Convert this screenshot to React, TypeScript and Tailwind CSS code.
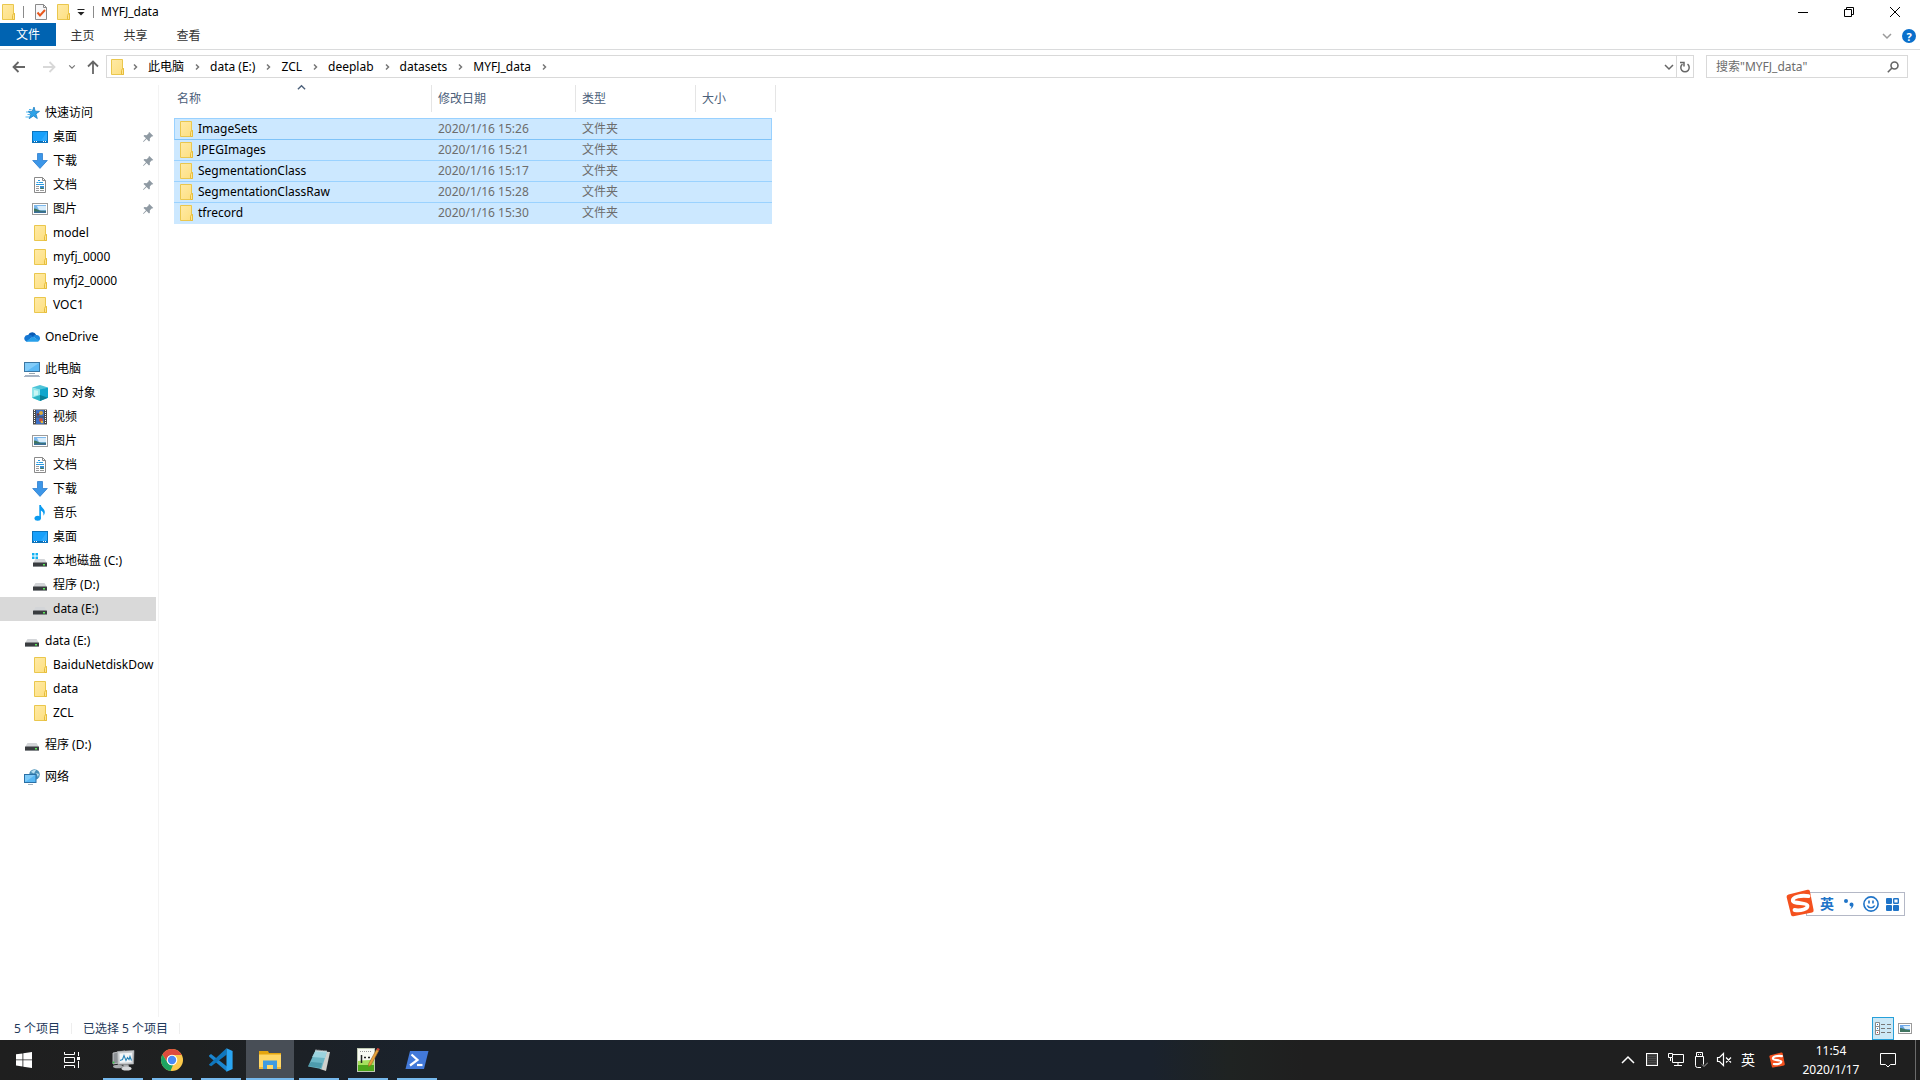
import type { ReactNode } from 'react'

type IconProps = { className?: string }

/* ---------- small shell icons (16px grid) ---------- */

function FolderIcon({ className = 'h-4 w-4' }: IconProps) {
  return (
    <svg viewBox="0 0 16 16" className={className} aria-hidden>
      <defs>
        <linearGradient id="folder-fill" x1="0" y1="0" x2="1" y2="1">
          <stop offset="0" stopColor="#ffeaa6" />
          <stop offset="1" stopColor="#fddf7f" />
        </linearGradient>
      </defs>
      <path d="M2.5.5h11v9h1v6h-12z" fill="url(#folder-fill)" stroke="#eac74d" />
      <path d="M12.5 15.5v-4l1-2h1v6z" fill="#ffe48f" stroke="#e6bd3c" />
    </svg>
  )
}

function QuickAccessIcon() {
  return (
    <svg viewBox="0 0 16 16" className="h-4 w-4" aria-hidden>
      <path
        d="M10 2l1.2 4.2 4.3.2-3.6 2.5 1.4 4.6-3.9-2.6-4.2 2.8 1.7-4.8L4 6.4l4.3-.2z"
        fill="#2da2e8"
        stroke="#1b7fc4"
        strokeWidth=".8"
      />
      <path d="M5 4.5h2.5M2 7h3M3.5 9.5h3M1.5 12h4" stroke="#52b6ee" fill="none" />
    </svg>
  )
}

function DesktopIcon() {
  return (
    <svg viewBox="0 0 16 16" className="h-4 w-4" aria-hidden>
      <rect x=".5" y="2.5" width="15" height="11" fill="#18a0fb" stroke="#0b74bd" />
      <path d="M15 3v8L8 13z" fill="#3db0ff" opacity=".6" />
      <path d="M1 12.5h14" stroke="#0a6cb5" />
      <path d="M2 12.5h1M4 12.5h1M11 12.5h1M13 12.5h1" stroke="#fff" />
    </svg>
  )
}

function DownloadIcon() {
  return (
    <svg viewBox="0 0 16 16" className="h-4 w-4" aria-hidden>
      <path d="M5.5.5h5v7h4.8L8 15.4.7 7.5h4.8z" fill="#3c96e8" stroke="#2f7fce" strokeWidth=".8" />
    </svg>
  )
}

function DocumentIcon() {
  return (
    <svg viewBox="0 0 16 16" className="h-4 w-4" aria-hidden>
      <path d="M2.5.5h8l3 3v12h-11z" fill="#fff" stroke="#8a8a8a" />
      <path d="M10.5.5v3h3" fill="none" stroke="#8a8a8a" />
      <path d="M6 3.5h2M4.500 5.500h2M7 5.500h4M4 7.500h8" stroke="#2b9be0" />
      <path d="M4 9.5h3M4 11.5h3M4 13.5h3" stroke="#9a9a9a" />
      <rect x="8" y="9" width="4" height="3" fill="#3d8fd0" />
      <path d="M8 12l2-1.5 2 1.5z" fill="#4c7c4e" />
      <path d="M8 13.5h4" stroke="#9a9a9a" />
    </svg>
  )
}

function PictureIcon() {
  return (
    <svg viewBox="0 0 16 16" className="h-4 w-4" aria-hidden>
      <rect x=".5" y="2.5" width="15" height="11" fill="#fff" stroke="#9b9b9b" />
      <rect x="2" y="4" width="12" height="8" fill="#7db8ec" />
      <path d="M5 5h9v4H7z" fill="#d9edfb" />
      <path d="M2 7.5c3 0 4 2 7 2.200 2 0 4 .3 5 0V12H2z" fill="#3f7560" />
      <path d="M2 10.5h12V12H2z" fill="#3b6f9a" />
    </svg>
  )
}

function OneDriveIcon() {
  return (
    <svg viewBox="0 0 16 16" className="h-4 w-4" aria-hidden>
      <path d="M4.2 6.2a4.3 4.3 0 0 1 8-.3L9 9z" fill="#0a5bb5" />
      <path d="M1.8 12.2A3.4 3.4 0 0 1 4 6c2-.7 3.5.2 5 1.5l-6 5.200z" fill="#1476d2" />
      <path d="M9 7.5c1-1.5 2.3-1.8 3.4-1.5A3.3 3.3 0 0 1 16 9.6c0 1.3-.6 2-1.3 2.4z" fill="#1b86dd" />
      <path d="M2 12.2L9 7.7l6.300 3.700c-.5.8-1.2 1.2-2.3 1.3H3.5c-.7 0-1.2-.2-1.5-.5z" fill="#28a0ea" />
    </svg>
  )
}

function ComputerIcon() {
  return (
    <svg viewBox="0 0 16 16" className="h-4 w-4" aria-hidden>
      <rect x=".5" y="1.5" width="15" height="9" fill="#5cb9f5" stroke="#3b77a3" />
      <path d="M1 2h14L3 10H1z" fill="#93d4fb" opacity=".7" />
      <path d="M5 12.5h6" stroke="#9aa7b0" />
      <path d="M0 15.5h16M1 14.5h14" stroke="#a9b5c4" />
    </svg>
  )
}

function CubeIcon() {
  return (
    <svg viewBox="0 0 16 16" className="h-4 w-4" aria-hidden>
      <path d="M8 0l8 2.6L8 5.5 0 2.6z" fill="#4fc4d8" />
      <path d="M0 2.6L8 4.5V16l-8-3.3z" fill="#8fe5ea" />
      <path d="M16 2.6L8 4.5V16l8-3.3z" fill="#11a6cc" />
      <path d="M0 12.7L8 10v6z" fill="#2bb3c4" />
      <path d="M16 12.7L8 10v6z" fill="#0a7f96" />
      <path d="M2 5l4 .8v4L2 11z" fill="#c8f6f4" />
    </svg>
  )
}

function VideoIcon() {
  return (
    <svg viewBox="0 0 16 16" className="h-4 w-4" aria-hidden>
      <rect x="1" y=".5" width="14" height="15" fill="#4a4a4a" />
      <path d="M2.5 1v14M13.5 1v14" stroke="#fff" strokeDasharray="1 1" />
      <rect x="4" y="1" width="8" height="6.500" fill="#3c6fc4" />
      <rect x="4" y="8.500" width="8" height="6.500" fill="#3c6fc4" />
      <circle cx="9" cy="4" r="2" fill="#d9a93c" />
      <circle cx="6" cy="5.500" r="1.300" fill="#7a3b35" />
      <circle cx="9" cy="11" r="2" fill="#c8503c" />
      <circle cx="10" cy="13" r="1.300" fill="#e0b840" />
    </svg>
  )
}

function MusicIcon() {
  return (
    <svg viewBox="0 0 16 16" className="h-4 w-4" aria-hidden>
      <ellipse cx="5.700" cy="13.300" rx="3.200" ry="2.500" fill="#0a9bf0" />
      <path d="M7.3 0h1.6c.3 2.8 3.8 3.6 3.900 7 0 1.7-.7 3-1.5 3.700.6-2.700-.4-4.300-2.400-5.200v8H7.300z" fill="#0a9bf0" />
    </svg>
  )
}

function DriveIcon({ system = false }: { system?: boolean }) {
  return (
    <svg viewBox="0 0 16 16" className="h-4 w-4" aria-hidden>
      <path d="M3.500 6h9l2.500 4H1z" fill="#d3d5d8" />
      <rect x="1" y="9.500" width="14" height="4.500" rx=".5" fill="#3a3d40" />
      <path d="M1 13.500h14" stroke="#85898c" />
      <rect x="11" y="11" width="2" height="1.500" fill="#5bea5b" />
      {system && (
        <path d="M0 0h2.500v2.500H0zM3.500 0H6v2.500H3.500zM0 3.500h2.500V6H0zM3.500 3.500H6V6H3.500z" fill="#12b1f3" />
      )}
    </svg>
  )
}

function NetworkIcon() {
  return (
    <svg viewBox="0 0 16 16" className="h-4 w-4" aria-hidden>
      <circle cx="10.500" cy="5.500" r="5.300" fill="#4a90b8" />
      <path d="M7 3c1.500-2 4-2.500 5-2l-2 3.500zM12 4l3 1-1 3z" fill="#b9dff0" />
      <rect x=".5" y="5.500" width="11.500" height="8" fill="#58b7f3" stroke="#2a6fa5" />
      <path d="M1 6h10L2 12.500H1z" fill="#8fd2fa" opacity=".7" />
      <path d="M4 15.500h5" stroke="#a4b4c0" />
    </svg>
  )
}

function PinIcon() {
  return (
    <svg viewBox="0 0 12 12" className="h-3 w-3" aria-hidden>
      <path d="M7.300 1l4 4-1.200.6-.5-.1-1.800 2 .1 2.300-.9.800-2.400-2.500L1.500 11l-.5-.5 3-3.200L1.500 4.900l.9-.9 2.300.2 2-1.900-.1-.6z" fill="#8f9aa3" />
    </svg>
  )
}

function Chevron({ className = '', d = 'M4 2.500L6.500 5 4 7.500' }: { className?: string; d?: string }) {
  return (
    <svg viewBox="0 0 10 10" className={className} fill="none" stroke="currentColor" strokeWidth="1.500" aria-hidden>
      <path d={d} />
    </svg>
  )
}

function SogouIcon({ className = '' }: IconProps) {
  return (
    <svg viewBox="0 0 28 28" className={className} aria-hidden>
      <path d="M2.500 5.500L21.500.8q2-.4 2.400 1.400L27.600 21q.3 2-1.500 2.500L7.500 27.300q-2 .3-2.500-1.500L.6 8q-.3-2 1.900-2.500z" fill="#f4511e" />
      <path
        d="M22.500 7.200C15 5.800 6.500 8 6.800 11.500c.3 3.500 14.200 1.800 14.700 5.300.4 3.200-6.500 5.200-13 4.200"
        fill="none"
        stroke="#fff"
        strokeWidth="3.800"
        strokeLinecap="round"
      />
    </svg>
  )
}

/* ---------- window chrome ---------- */

function TitleBar() {
  return (
    <header className="flex h-[23px] items-center pr-[2px]">
      <FolderIcon />
      <span className="ml-[7px] h-3 w-px bg-[#8a8a8a]" />
      <button type="button" aria-label="属性" className="ml-[10px]">
        <svg viewBox="0 0 14 16" className="h-4 w-[14px]" aria-hidden>
          <path d="M1.500.500h8l3 3v12h-11z" fill="#f7f7f9" stroke="#8a8a8a" />
          <path d="M9.500.500v3h3" fill="none" stroke="#8a8a8a" />
          <path d="M3.500 8.500l2.500 3 5-5.500" fill="none" stroke="#e8571c" strokeWidth="2" />
        </svg>
      </button>
      <button type="button" aria-label="新建文件夹" className="ml-[7px]">
        <FolderIcon />
      </button>
      <button type="button" aria-label="自定义快速访问工具栏" className="ml-[6px]">
        <svg viewBox="0 0 8 8" className="h-2 w-2" aria-hidden>
          <path d="M.5 1.500h7" stroke="#222" />
          <path d="M.5 4h7L4 7.500z" fill="#222" />
        </svg>
      </button>
      <span className="ml-2 h-3 w-px bg-[#8a8a8a]" />
      <h1 className="ml-[7px]">MYFJ_data</h1>

      <div className="ml-auto flex h-full">
        <button type="button" aria-label="最小化" className="grid w-[46px] place-items-center">
          <svg viewBox="0 0 10 10" className="h-[10px] w-[10px]" aria-hidden>
            <path d="M0 5.500h10" stroke="#000" />
          </svg>
        </button>
        <button type="button" aria-label="向下还原" className="grid w-[46px] place-items-center">
          <svg viewBox="0 0 10 10" className="h-[10px] w-[10px]" fill="none" stroke="#000" aria-hidden>
            <path d="M.5 2.500h7v7h-7zM2.500 2.500v-2h7v7h-2" />
          </svg>
        </button>
        <button type="button" aria-label="关闭" className="grid w-[46px] place-items-center">
          <svg viewBox="0 0 10 10" className="h-[10px] w-[10px]" fill="none" stroke="#000" aria-hidden>
            <path d="M0 0l10 10M10 0L0 10" />
          </svg>
        </button>
      </div>
    </header>
  )
}

function RibbonTabs() {
  return (
    <div className="flex h-[27px] items-start border-b border-[#dadbdc] text-[#333]">
      <button type="button" className="h-[23px] w-14 bg-[#0063b1] text-white">
        文件
      </button>
      {['主页', '共享', '查看'].map((tab) => (
        <button key={tab} type="button" className="h-[25px] w-[53px]">
          {tab}
        </button>
      ))}
      <div className="ml-auto flex h-[26px] items-center gap-[10px] pr-1">
        <button type="button" aria-label="展开功能区">
          <Chevron className="h-[10px] w-[10px] text-[#9a9a9a]" d="M1 3l4 4 4-4" />
        </button>
        <button
          type="button"
          aria-label="帮助"
          className="grid h-[14px] w-[14px] place-items-center rounded-full bg-[#0a70cc] text-[11px] font-bold leading-none text-white"
        >
          ?
        </button>
      </div>
    </div>
  )
}

const crumbs = ['此电脑', 'data (E:)', 'ZCL', 'deeplab', 'datasets', 'MYFJ_data']

function AddressRow() {
  return (
    <div className="mb-[2px] flex h-[33px] items-center pr-3">
      <button type="button" aria-label="后退" className="ml-3 text-[#666]">
        <svg viewBox="0 0 14 14" className="h-[14px] w-[14px]" fill="none" stroke="currentColor" strokeWidth="1.800" aria-hidden>
          <path d="M13 7H1.500M6.500 2l-5 5 5 5" />
        </svg>
      </button>
      <button type="button" aria-label="前进" className="ml-4 text-[#d8d8d8]">
        <svg viewBox="0 0 14 14" className="h-[14px] w-[14px]" fill="none" stroke="currentColor" strokeWidth="1.800" aria-hidden>
          <path d="M1 7h11.500M7.500 2l5 5-5 5" />
        </svg>
      </button>
      <button type="button" aria-label="最近的位置" className="ml-3 text-[#777]">
        <Chevron className="h-2 w-2" d="M1.500 3L5 6.500 8.500 3" />
      </button>
      <button type="button" aria-label="上移" className="ml-[10px] text-[#666]">
        <svg viewBox="0 0 14 14" className="h-[14px] w-[14px]" fill="none" stroke="currentColor" strokeWidth="1.800" aria-hidden>
          <path d="M7 14V1.500M2 6.500l5-5 5 5" />
        </svg>
      </button>

      <nav aria-label="地址" className="ml-[6px] flex h-[23px] flex-1 items-center border border-[#d9d9d9] pl-[2px]">
        <FolderIcon />
        <Chevron className="ml-[5px] mr-2 h-[10px] w-[10px] text-[#777]" />
        {crumbs.map((crumb) => (
          <span key={crumb} className="flex items-center">
            <a href="#" className="whitespace-nowrap">
              {crumb}
            </a>
            <Chevron className="mx-2 h-[10px] w-[10px] text-[#777]" />
          </span>
        ))}
        <button type="button" aria-label="以前的位置" className="ml-auto grid w-[14px] place-items-center text-[#666]">
          <Chevron className="h-[10px] w-[10px]" d="M1 3l4 4 4-4" />
        </button>
        <button
          type="button"
          aria-label="刷新"
          className="grid h-full w-[17px] place-items-center border-l border-[#d9d9d9] text-[#666]"
        >
          <svg viewBox="0 0 12 12" className="h-3 w-3" fill="none" stroke="currentColor" strokeWidth="1.500" aria-hidden>
            <path d="M8.500 3.200A4.200 4.200 0 1 1 3.500 3.200M1 1.500h4v4" />
          </svg>
        </button>
      </nav>

      <form role="search" className="ml-3 flex h-[23px] w-[202px] items-center border border-[#d9d9d9] pl-[9px] pr-2">
        <input
          type="text"
          aria-label="搜索"
          placeholder={'搜索"MYFJ_data"'}
          className="min-w-0 flex-1 bg-transparent outline-none placeholder:text-[#6d6d6d]"
        />
        <button type="submit" aria-label="开始搜索" className="text-[#666]">
          <svg viewBox="0 0 12 12" className="h-3 w-3" fill="none" stroke="currentColor" strokeWidth="1.600" aria-hidden>
            <circle cx="7.500" cy="4.500" r="3.500" />
            <path d="M5 7L.8 11.200" />
          </svg>
        </button>
      </form>
    </div>
  )
}

/* ---------- navigation pane ---------- */

type NavItem = { label: string; icon: ReactNode; pinned?: boolean; selected?: boolean }
type NavGroup = { root: NavItem; items: NavItem[] }

const navGroups: NavGroup[] = [
  {
    root: { label: '快速访问', icon: <QuickAccessIcon /> },
    items: [
      { label: '桌面', icon: <DesktopIcon />, pinned: true },
      { label: '下载', icon: <DownloadIcon />, pinned: true },
      { label: '文档', icon: <DocumentIcon />, pinned: true },
      { label: '图片', icon: <PictureIcon />, pinned: true },
      { label: 'model', icon: <FolderIcon /> },
      { label: 'myfj_0000', icon: <FolderIcon /> },
      { label: 'myfj2_0000', icon: <FolderIcon /> },
      { label: 'VOC1', icon: <FolderIcon /> },
    ],
  },
  { root: { label: 'OneDrive', icon: <OneDriveIcon /> }, items: [] },
  {
    root: { label: '此电脑', icon: <ComputerIcon /> },
    items: [
      { label: '3D 对象', icon: <CubeIcon /> },
      { label: '视频', icon: <VideoIcon /> },
      { label: '图片', icon: <PictureIcon /> },
      { label: '文档', icon: <DocumentIcon /> },
      { label: '下载', icon: <DownloadIcon /> },
      { label: '音乐', icon: <MusicIcon /> },
      { label: '桌面', icon: <DesktopIcon /> },
      { label: '本地磁盘 (C:)', icon: <DriveIcon system /> },
      { label: '程序 (D:)', icon: <DriveIcon /> },
      { label: 'data (E:)', icon: <DriveIcon />, selected: true },
    ],
  },
  {
    root: { label: 'data (E:)', icon: <DriveIcon /> },
    items: [
      { label: 'BaiduNetdiskDow', icon: <FolderIcon /> },
      { label: 'data', icon: <FolderIcon /> },
      { label: 'ZCL', icon: <FolderIcon /> },
    ],
  },
  { root: { label: '程序 (D:)', icon: <DriveIcon /> }, items: [] },
  { root: { label: '网络', icon: <NetworkIcon /> }, items: [] },
]

function NavRow({ item, nested = false }: { item: NavItem; nested?: boolean }) {
  return (
    <a
      href="#"
      className={`flex h-6 items-center gap-[5px] whitespace-nowrap ${nested ? 'pl-8' : 'pl-6'} ${
        item.selected ? 'bg-[#d9d9d9]' : ''
      }`}
    >
      <span className="shrink-0">{item.icon}</span>
      <span>{item.label}</span>
      {item.pinned && (
        <span className="ml-auto pr-[2px]">
          <PinIcon />
        </span>
      )}
    </a>
  )
}

function NavPane() {
  return (
    <nav aria-label="导航窗格" className="w-[159px] shrink-0 border-r border-[#f3f3f3] pr-[2px] pt-4">
      <div className="flex flex-col gap-2">
        {navGroups.map((group) => (
          <div key={group.root.label}>
            <NavRow item={group.root} />
            {group.items.map((item) => (
              <NavRow key={item.label} item={item} nested />
            ))}
          </div>
        ))}
      </div>
    </nav>
  )
}

/* ---------- file list ---------- */

const files = [
  { name: 'ImageSets', modified: '2020/1/16 15:26' },
  { name: 'JPEGImages', modified: '2020/1/16 15:21' },
  { name: 'SegmentationClass', modified: '2020/1/16 15:17' },
  { name: 'SegmentationClassRaw', modified: '2020/1/16 15:28' },
  { name: 'tfrecord', modified: '2020/1/16 15:30' },
]

function rowStyle(index: number) {
  if (index === 0) return 'h-[22px] border-y border-t-[#99d1ff] border-b-[#7fc3f8] bg-[#cce8ff]'
  if (index === files.length - 1) return 'h-[21px] border-b border-[#cce8ff] bg-[#cce8ff]'
  return 'h-[21px] border-b border-[#9ad2ff] bg-[#cce8ff]'
}

function FileList() {
  return (
    <main className="flex-1 pl-[15px]">
      <table className="w-[602px] table-fixed border-separate border-spacing-0 text-left">
        <colgroup>
          <col className="w-[258px]" />
          <col className="w-[144px]" />
          <col className="w-[120px]" />
          <col className="w-[76px]" />
          <col className="w-1" />
        </colgroup>
        <thead className="text-[#4c607a]">
          <tr>
            <th className="relative h-[27px] border-r border-[#e5e5e5] p-0 pl-[3px] font-normal" aria-sort="ascending">
              <Chevron className="absolute left-[123px] top-[-2px] h-[9px] w-[9px]" d="M1 7l4-4 4 4" />
              名称
            </th>
            <th className="border-r border-[#e5e5e5] p-0 pl-[6px] font-normal">修改日期</th>
            <th className="border-r border-[#e5e5e5] p-0 pl-[6px] font-normal">类型</th>
            <th className="p-0 pl-[6px] font-normal">大小</th>
            <td className="border-r border-[#e5e5e5] p-0" />
          </tr>
        </thead>
        <tbody className="text-[#6d6d6d]">
          <tr aria-hidden>
            <td className="h-[6px] p-0" />
          </tr>
          {files.map((file, i) => (
            <tr key={file.name}>
              <td className={`p-0 ${rowStyle(i)} ${i === 0 ? 'border-l pl-[3px] border-l-[#99d1ff]' : 'pl-1'}`}>
                <span className="flex items-center gap-1 text-black">
                  <FolderIcon />
                  {file.name}
                </span>
              </td>
              <td className={`p-0 pl-[6px] ${rowStyle(i)}`}>{file.modified}</td>
              <td className={`p-0 pl-[6px] ${rowStyle(i)}`}>文件夹</td>
              <td className={`p-0 ${rowStyle(i)} ${i === 0 ? 'border-r border-r-[#99d1ff]' : ''}`} />
            </tr>
          ))}
        </tbody>
      </table>
    </main>
  )
}

function StatusBar() {
  return (
    <footer className="flex h-[23px] items-center text-[#1e395b]">
      <span className="pl-[14px]">5 个项目</span>
      <span className="ml-[11px] h-[11px] w-px bg-[#eee]" />
      <span className="ml-[11px]">已选择 5 个项目</span>
      <span className="ml-[11px] h-[11px] w-px bg-[#eee]" />
      <div className="ml-auto flex h-full items-center gap-[3px] pr-[7px]">
        <button
          type="button"
          aria-label="详细信息"
          className="grid h-[23px] w-[22px] place-items-center border border-[#26a0da] bg-[#cce8f6]"
        >
          <svg viewBox="0 0 16 14" className="h-[14px] w-4" aria-hidden>
            <path d="M.5.500h4v12h-4zM.5 4.500h4M.5 8.500h4" fill="#fff" stroke="#8a8a8a" />
            <path d="M2 2.500h1M2 6.500h1" stroke="#2a78c8" />
            <path d="M2 10.500h1" stroke="#d03030" />
            <path d="M6 2.500h4M12 2.500h4M6 6.500h4M12 6.500h4M6 10.500h4M12 10.500h4" stroke="#777" />
          </svg>
        </button>
        <button type="button" aria-label="大缩略图">
          <svg viewBox="0 0 16 16" className="h-4 w-4" aria-hidden>
            <rect x="1.500" y="2.500" width="13" height="10" fill="#fff" stroke="#9b9b9b" />
            <rect x="3" y="4" width="10" height="7" fill="#6fa9ea" />
            <path d="M6 5h7v3H8z" fill="#d9edfb" />
            <path d="M3 7c3 0 4 1.500 10 2v2H3z" fill="#3f7560" />
          </svg>
        </button>
      </div>
    </footer>
  )
}

/* ---------- input method bar ---------- */

function ImeBar() {
  return (
    <div className="absolute bottom-[164px] right-[15px] flex h-6 items-center border border-[#b4b8c6] bg-white pl-[13px] pr-1 text-[#1f74c8]">
      <SogouIcon className="absolute -left-[21px] -top-1 h-7 w-7" />
      <button type="button" className="text-[14px] font-bold">
        英
      </button>
      <button type="button" aria-label="中文标点" className="ml-[10px]">
        <svg viewBox="0 0 10 12" className="h-3 w-[10px]" fill="currentColor" aria-hidden>
          <circle cx="2" cy="3" r="2" />
          <path d="M5.500 6.500a2 2 0 0 1 4 0c0 2.300-1.200 3.800-3.500 4.700 1-1 1.500-1.700 1.400-2.700A2 2 0 0 1 5.500 6.500z" />
        </svg>
      </button>
      <button type="button" aria-label="表情" className="ml-[9px]">
        <svg viewBox="0 0 16 16" className="h-4 w-4" fill="none" stroke="currentColor" strokeWidth="1.600" aria-hidden>
          <circle cx="8" cy="8" r="7.100" />
          <path d="M6 4.500v3M10 4.500v3M4.300 9.500c1.500 3 5.900 3 7.400 0" />
        </svg>
      </button>
      <button type="button" aria-label="工具箱" className="ml-[7px]">
        <svg viewBox="0 0 14 14" className="h-[14px] w-[14px]" fill="currentColor" aria-hidden>
          <rect x="0" y="1" width="6" height="6" rx="1" />
          <rect x="0" y="8" width="6" height="6" rx="1" />
          <rect x="7" y="8" width="6" height="6" rx="1" />
          <rect x="7.700" y="1.700" width="4.600" height="4.600" rx=".5" fill="#fff" stroke="currentColor" strokeWidth="1.400" />
        </svg>
      </button>
    </div>
  )
}

/* ---------- taskbar ---------- */

function MonitorAppIcon() {
  return (
    <svg viewBox="0 0 24 24" className="h-6 w-6" aria-hidden>
      <path d="M2 5l12-2v11L2 16z" fill="#8d9195" stroke="#d0d3d5" strokeWidth=".8" />
      <ellipse cx="7" cy="18.500" rx="5" ry="1.800" fill="#a8abad" />
      <path d="M6.500 3.500L23 2.500l-.5 13.500L7 16.500z" fill="#c9cccf" stroke="#a6a9ab" strokeWidth=".6" />
      <path d="M8.500 5.500L21 4.700l-.5 9.500-11.700.6z" fill="#f2f6f8" />
      <path d="M9 12.500l2.500-1 1.500-4 2 5 1.500-3 1.500 2 1-3 1.500 4" fill="none" stroke="#2c86b8" strokeWidth="1.100" />
      <path d="M12.500 16.500h5l.5 3h-6z" fill="#a9acae" />
      <ellipse cx="15.500" cy="20.500" rx="5" ry="2" fill="#d4d6d8" />
      <circle cx="2.500" cy="14.500" r="1" fill="#3ac04a" />
    </svg>
  )
}

function ChromeAppIcon() {
  return (
    <svg viewBox="0 0 24 24" className="h-6 w-6" aria-hidden>
      <circle cx="12" cy="12" r="11" fill="#fbc94b" />
      <path d="M12 1a11 11 0 0 1 9.700 6H12a5 5 0 0 0-4.400 7.300L2.500 6.500A11 11 0 0 1 12 1z" fill="#dd4b3e" />
      <path d="M2.500 6.500l5.200 8.200A5 5 0 0 0 13 17l-2.500 6A11 11 0 0 1 2.500 6.500z" fill="#1da462" />
      <circle cx="12" cy="12" r="5.300" fill="#fff" />
      <circle cx="12" cy="12" r="4.200" fill="#4a8af4" />
    </svg>
  )
}

function CodeAppIcon() {
  return (
    <svg viewBox="0 0 24 24" className="h-6 w-6" aria-hidden>
      <path d="M0 7.500l2-1.400 16 12.400v5.200L.3 8.700z" fill="#1b86d0" />
      <path d="M0 16.500L17.500.3v6.400L2.200 18.300 0 17z" fill="#0f76bd" />
      <path d="M17.500.3L23.600 3v18l-6.100 2.800z" fill="#2aa5f2" />
    </svg>
  )
}

function ExplorerAppIcon() {
  return (
    <svg viewBox="0 0 24 24" className="h-6 w-6" aria-hidden>
      <path d="M1 3h9l1 2h12v4H1z" fill="#e5a50f" />
      <path d="M1 6.500h22V21H1z" fill="#ffd767" />
      <path d="M5 21v-8.500h14V21h-4v-4H9v4z" fill="#3f9be0" />
      <path d="M1 21h4v-2H1zM19 21h4v-2h-4z" fill="#f0bb3a" />
    </svg>
  )
}

function NotepadAppIcon() {
  return (
    <svg viewBox="0 0 24 24" className="h-6 w-6" aria-hidden>
      <path d="M9 3l14 1-4 19-6-2z" fill="#cfd0cc" />
      <path d="M8.500 2.500L20 3.500 14.500 21 1 18.500z" fill="#6cb6c6" />
      <path d="M8.500 2.500L20 3.500l-2 6.500L5 9z" fill="#a9dbe4" opacity=".8" />
      <path d="M8.500 2.500L20 3.500" stroke="#e6e6e6" strokeWidth="2" strokeDasharray="1 1" />
      <path d="M4 14l11 1-1 5-13-2z" fill="#2d7f93" opacity=".5" />
    </svg>
  )
}

function EditorAppIcon() {
  return (
    <svg viewBox="0 0 24 24" className="h-6 w-6" aria-hidden>
      <rect x="1.500" y=".5" width="17" height="23" fill="#f8faf3" stroke="#bfc9b3" />
      <path d="M2 13c5-1 10-1 16-1v11H2z" fill="#a6e05e" />
      <path d="M2 17h16v6H2z" fill="#4da61b" />
      <path d="M4 3.500h12" stroke="#9a9a9a" strokeDasharray="1 1" />
      <path d="M5.500 7v8" stroke="#222" strokeWidth="1.500" />
      <path d="M8 9.500h2M12 9.500h2" stroke="#222" strokeWidth="1.500" />
      <path d="M20.500 1.500l2.300 1.200L15 17l-2.500 1.500.2-2.800z" fill="#e8a33a" stroke="#96622a" strokeWidth=".6" />
      <path d="M20.500 1.500l2.300 1.200 1-1.800-2.300-1z" fill="#d04438" />
    </svg>
  )
}

function ShellAppIcon() {
  return (
    <svg viewBox="0 0 24 24" className="h-6 w-6" aria-hidden>
      <path d="M5 3h18.500L19 21H.5z" fill="#4279d9" />
      <path d="M6.500 6.500l6 5.500-7.500 5.500" fill="none" stroke="#fff" strokeWidth="2.200" />
      <path d="M12 17h5.500" stroke="#fff" strokeWidth="2.200" />
    </svg>
  )
}

const apps = [
  { label: '资源监视器', icon: <MonitorAppIcon /> },
  { label: 'Google Chrome', icon: <ChromeAppIcon /> },
  { label: 'Visual Studio Code', icon: <CodeAppIcon /> },
  { label: '文件资源管理器', icon: <ExplorerAppIcon />, active: true },
  { label: '记事本', icon: <NotepadAppIcon /> },
  { label: 'Notepad++', icon: <EditorAppIcon /> },
  { label: 'Windows PowerShell', icon: <ShellAppIcon /> },
]

function TrayButton({ label, children }: { label: string; children: ReactNode }) {
  return (
    <button type="button" aria-label={label} className="grid h-full w-6 place-items-center">
      <svg viewBox="0 0 16 16" className="h-4 w-4" fill="none" stroke="#fff" aria-hidden>
        {children}
      </svg>
    </button>
  )
}

function Taskbar() {
  return (
    <div className="flex h-10 items-stretch bg-[linear-gradient(90deg,#1f1f1f_0%,#1e2021_10%,#1a222c_22%,#1a222d_60%,#1f2322_64%,#1f1f1f_68%)] text-white">
      <button type="button" aria-label="开始" className="grid w-12 place-items-center">
        <svg viewBox="0 0 16 16" className="h-4 w-4" fill="#fff" aria-hidden>
          <path d="M0 2.300L6.500 1.400v6.100H0zM7.300 1.300L16 0v7.500H7.300zM0 8.300h6.500v6.200L0 13.600zM7.300 8.300H16V16l-8.700-1.300z" />
        </svg>
      </button>
      <button type="button" aria-label="任务视图" className="grid w-12 place-items-center">
        <svg viewBox="0 0 16 16" className="h-4 w-4" fill="none" stroke="#fff" aria-hidden>
          <path d="M.5 0v2.500h10V0M.5 16v-2.500h10V16M.5 5.500h10v5H.5zM14.500 0v4M14.500 9v7" />
          <path d="M13 5h3v3h-3z" fill="#fff" stroke="none" />
        </svg>
      </button>
      <div className="ml-[3px] flex gap-px">
        {apps.map((app) => (
          <button
            key={app.label}
            type="button"
            aria-label={app.label}
            className={`flex w-12 flex-col items-center ${app.active ? 'bg-[#484e56]' : 'px-1'}`}
          >
            <span className="grid flex-1 place-items-center pt-px">{app.icon}</span>
            <span className="h-[2px] w-full bg-[#76b9ed]" />
          </button>
        ))}
      </div>

      <div className="ml-auto flex items-center">
        <TrayButton label="显示隐藏的图标">
          <path d="M2 11l6-6 6 6" strokeWidth="1.500" />
        </TrayButton>
        <TrayButton label="触摸键盘">
          <rect x="2.500" y="1.500" width="11" height="12" fill="#4a4a4a" />
          <path d="M5 3v9M7 3v9M9 3v9M11 3v9" stroke="#222" strokeDasharray="1 1" />
        </TrayButton>
        <TrayButton label="网络">
          <path d="M5 2.500h10.500v8H4.500V6M10 10.500v3M6 13.500h8M.5 1.500h4v4h-4zM2.500 5.500V9" />
        </TrayButton>
        <TrayButton label="安全删除硬件">
          <path d="M4.500.500h6v4h-6zM3.500 4.500h8v8M3.500 4.500v9q0 2 2 2H9M6 2.500h1M8 2.500h1" />
          <path d="M10 12.500l2 2 4-4" stroke="#aaa" />
        </TrayButton>
        <TrayButton label="音量">
          <path d="M1.500 5.500h2l4-4v12l-4-4h-2zM10 5.500l5 5M15 5.500l-5 5" strokeWidth="1.200" />
        </TrayButton>
        <button type="button" className="w-6 text-[14px]">
          英
        </button>
        <button type="button" aria-label="搜狗输入法" className="grid w-[34px] place-items-center">
          <SogouIcon className="h-4 w-4" />
        </button>
        <button type="button" className="w-[74px] text-center leading-[19px]">
          <span className="block">11:54</span>
          <span className="block">2020/1/17</span>
        </button>
        <button type="button" aria-label="操作中心" className="grid h-full w-10 place-items-center">
          <svg viewBox="0 0 16 16" className="h-4 w-4" fill="none" stroke="#fff" aria-hidden>
            <path d="M.5 1.500h15v11h-5L8 15l-2.500-2.500h-5z" />
          </svg>
        </button>
        <button type="button" aria-label="显示桌面" className="ml-[7px] h-full w-[5px] border-l border-[#6b6b6b]" />
      </div>
    </div>
  )
}

export default function App() {
  return (
    <div className="relative flex min-h-screen flex-col bg-white font-['Noto_Sans','Noto_Sans_CJK_SC',sans-serif] text-[12px] leading-4 text-black">
      <TitleBar />
      <RibbonTabs />
      <AddressRow />
      <div className="flex flex-1">
        <NavPane />
        <FileList />
      </div>
      <StatusBar />
      <Taskbar />
      <ImeBar />
    </div>
  )
}
